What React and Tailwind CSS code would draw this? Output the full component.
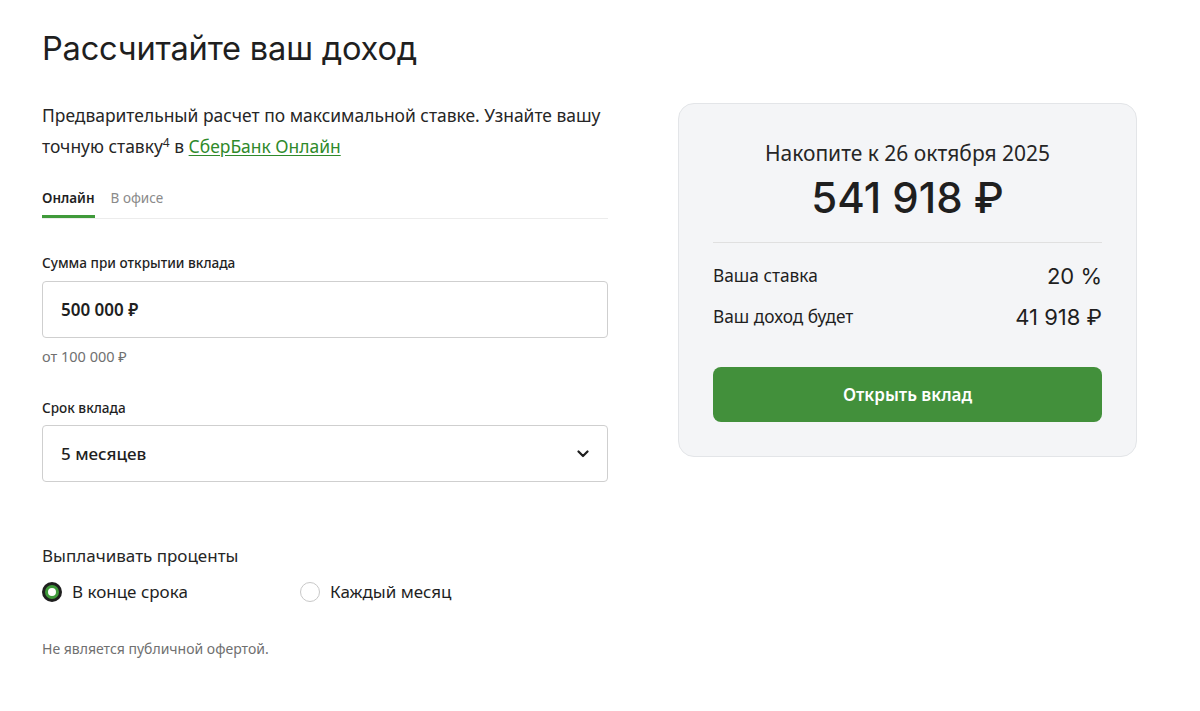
import React, { useState } from 'react';

const sans = { fontFamily: '"Noto Sans", "DejaVu Sans", sans-serif' };
const display = { fontFamily: 'Inter, "Noto Sans", sans-serif' };

const Radio = ({ checked, label, onClick }) => (
    <button className="flex items-center gap-[10px]" onClick={onClick}>
        {checked ? (
            <span className="flex h-[20px] w-[20px] items-center justify-center rounded-full bg-[#1f1f1f]">
                <span className="h-[14px] w-[14px] rounded-full border-[3px] border-[#3f9a3a] bg-white" />
            </span>
        ) : (
            <span className="h-[20px] w-[20px] rounded-full border border-[#c8c8c8] bg-white" />
        )}
        <span className="text-[17px] text-[#1f1f1f]">{label}</span>
    </button>
);

const App = () => {
    const [tab, setTab] = useState('online');
    const [payout, setPayout] = useState('end');

    return (
        <div className="min-h-[711px] w-full bg-white text-[#1f1f1f]" style={sans}>
            <div className="flex gap-[70px] px-[42px] pt-[28px]">
                <div className="w-[566px]">
                    <h1
                        className="text-[32.6px] font-normal leading-[40px] tracking-[-0.2px] text-[#1f1f1f]"
                        style={display}
                    >
                        Рассчитайте ваш доход
                    </h1>

                    <p className="mt-[32px] text-[17.45px] leading-[31px] text-[#262626]">
                        Предварительный расчет по максимальной ставке. Узнайте вашу точную
                        ставку<sup className="text-[12px] leading-none">4</sup> в{' '}
                        <a href="#" className="text-[#2f8a2b] underline underline-offset-2">
                            СберБанк Онлайн
                        </a>
                    </p>

                    <div className="mt-[26px] flex gap-[16px] border-b border-[#ececec] text-[13.5px]">
                        <button
                            className={`border-b-[3px] pb-[7px] font-semibold ${
                                tab === 'online'
                                    ? 'border-[#3f9a3a] text-[#1f1f1f]'
                                    : 'border-transparent text-[#8a8a8a]'
                            }`}
                            onClick={() => setTab('online')}
                        >
                            Онлайн
                        </button>
                        <button
                            className={`border-b-[3px] pb-[7px] ${
                                tab === 'office'
                                    ? 'border-[#3f9a3a] font-semibold text-[#1f1f1f]'
                                    : 'border-transparent text-[#8a8a8a]'
                            }`}
                            onClick={() => setTab('office')}
                        >
                            В офисе
                        </button>
                    </div>

                    <div className="mt-[34px] text-[13.6px] font-medium leading-[20px]">
                        Сумма при открытии вклада
                    </div>
                    <div className="mt-[8px] flex h-[57px] items-center rounded-[4px] border border-[#cfcfcf] px-[18px] text-[17px] font-semibold">
                        500 000 ₽
                    </div>
                    <div className="mt-[7px] text-[14.5px] leading-[22px] text-[#707070]">от 100 000 ₽</div>

                    <div className="mt-[31px] text-[13.6px] font-medium leading-[20px]">Срок вклада</div>
                    <div className="mt-[7px] flex h-[57px] items-center justify-between rounded-[4px] border border-[#cfcfcf] px-[18px] text-[17px] font-medium">
                        <span>5 месяцев</span>
                        <svg width="12" height="8" viewBox="0 0 12 8" fill="none">
                            <path
                                d="M1.5 1.5L6 6L10.5 1.5"
                                stroke="#1f1f1f"
                                strokeWidth="2.2"
                                strokeLinecap="round"
                                strokeLinejoin="round"
                            />
                        </svg>
                    </div>

                    <div className="mt-[62px] text-[17px] leading-[24px] text-[#262626]">
                        Выплачивать проценты
                    </div>
                    <div className="mt-[11px] flex gap-[63px]">
                        <div className="w-[195px]">
                            <Radio
                                checked={payout === 'end'}
                                label="В конце срока"
                                onClick={() => setPayout('end')}
                            />
                        </div>
                        <Radio
                            checked={payout === 'month'}
                            label="Каждый месяц"
                            onClick={() => setPayout('month')}
                        />
                    </div>

                    <div className="mt-[34px] text-[14px] leading-[20px] text-[#707070]">
                        Не является публичной офертой.
                    </div>
                </div>

                <div className="mt-[75px] h-[354px] w-[459px] rounded-[16px] border border-[#e3e5e8] bg-[#f4f5f7] px-[34px] pt-[35px]">
                    <div className="text-center text-[21px] leading-[28px] text-[#262626]">
                        Накопите к 26 октября 2025
                    </div>
                    <div
                        className="mt-[5px] text-center text-[42px] font-medium leading-[52px] text-[#1f1f1f]"
                        style={display}
                    >
                        541 918 ₽
                    </div>
                    <div className="mt-[18px] border-t border-[#e0e0e0]" />
                    <div className="mt-[19px] flex h-[28px] items-center justify-between">
                        <span className="text-[17.3px]">Ваша ставка</span>
                        <span className="text-[22px] font-normal" style={display}>
                            20 %
                        </span>
                    </div>
                    <div className="mt-[13px] flex h-[28px] items-center justify-between">
                        <span className="text-[17.3px]">Ваш доход будет</span>
                        <span className="text-[22px] font-normal" style={display}>
                            41 918 ₽
                        </span>
                    </div>
                    <button className="mt-[36px] flex h-[55px] w-full items-center justify-center rounded-[8px] bg-[#42903b] text-[17px] font-semibold text-white">
                        Открыть вклад
                    </button>
                </div>
            </div>
        </div>
    );
};

export default App;
